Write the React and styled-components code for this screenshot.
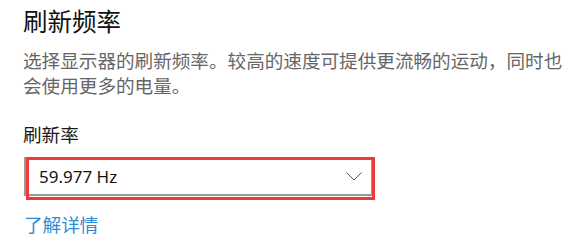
import React from "react";
import styled, { createGlobalStyle } from "styled-components";

const GlobalStyle = createGlobalStyle`
  html, body {
    margin: 0;
    padding: 0;
    background: #ffffff;
  }
  body {
    font-family: "Noto Sans", "Noto Sans CJK SC", sans-serif;
    -webkit-font-smoothing: antialiased;
  }
`;

const Page = styled.div`
  padding: 6px 0 0 23px;
  box-sizing: border-box;
  width: 575px;
`;

const Title = styled.h2`
  margin: 0;
  font-family: "Noto Sans CJK SC", sans-serif;
  font-weight: 400;
  font-size: 24.5px;
  line-height: 30px;
  color: #111111;
`;

const Description = styled.p`
  margin: 11px 0 0;
  max-width: 545px;
  font-family: "Noto Sans CJK SC", sans-serif;
  font-size: 18.6px;
  line-height: 25px;
  color: #666666;
`;

const Label = styled.div`
  margin-top: 24px;
  font-family: "Noto Sans CJK SC", sans-serif;
  font-size: 18.6px;
  line-height: 25px;
  color: #1a1a1a;
`;

const SelectWrap = styled.div`
  position: relative;
  width: 349px;
  margin-top: 11px;
  margin-left: 1px;
`;

const Select = styled.div`
  box-sizing: border-box;
  height: 39px;
  border: 2px solid #999999;
  background: #ffffff;
  display: flex;
  align-items: center;
  justify-content: space-between;
  padding: 0 9px 0 13px;
`;

const Value = styled.span`
  font-family: "Noto Sans", sans-serif;
  font-size: 17px;
  color: #141414;
`;

const Highlight = styled.div`
  position: absolute;
  left: 2px;
  top: 0;
  width: 349px;
  height: 43px;
  box-sizing: border-box;
  border: 3px solid #ef3a3c;
  pointer-events: none;
`;

const Link = styled.a`
  display: inline-block;
  margin-top: 15px;
  margin-left: 1px;
  font-family: "Noto Sans CJK SC", sans-serif;
  font-size: 18.6px;
  line-height: 25px;
  color: #2d8bd4;
  text-decoration: none;
`;

const Chevron = () => (
  <svg width="16" height="9" viewBox="0 0 16 9" fill="none">
    <polyline
      points="0.5,0.5 8,8 15.5,0.5"
      stroke="#555555"
      strokeWidth="1"
      fill="none"
    />
  </svg>
);

export default function App() {
  return (
    <>
      <GlobalStyle />
      <Page>
        <Title>刷新频率</Title>
        <Description>
          选择显示器的刷新频率。较高的速度可提供更流畅的运动，同时也会使用更多的电量。
        </Description>
        <Label>刷新率</Label>
        <SelectWrap>
          <Select>
            <Value>59.977 Hz</Value>
            <Chevron />
          </Select>
          <Highlight />
        </SelectWrap>
        <Link href="#">了解详情</Link>
      </Page>
    </>
  );
}
